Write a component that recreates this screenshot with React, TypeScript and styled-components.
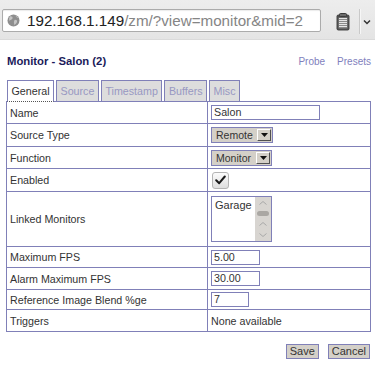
import React from 'react'
import styled, { createGlobalStyle } from 'styled-components'

const GlobalStyle = createGlobalStyle`
    html, body {
        margin: 0;
        padding: 0;
        background: #ffffff;
    }
    body {
        font-family: "Liberation Sans", Arial, sans-serif;
        font-size: 10.7px;
        color: #333333;
    }
`

const BORDER = '#8080b8'

const StyledChrome = styled.div`
    height: 40px;
    box-sizing: border-box;
    display: flex;
    align-items: flex-start;
    padding: 9px 0 0 2px;
    background: linear-gradient(#ededed, #e4e4e4);
    border-bottom: 1px solid #dadada;
`

const StyledAddressField = styled.div`
    width: 319px;
    height: 23px;
    box-sizing: border-box;
    display: flex;
    align-items: center;
    gap: 7px;
    padding-left: 4px;
    background: #ffffff;
    border: 1px solid #ababab;
    border-radius: 2px;
    box-shadow: inset 0 1px 1px rgba(0, 0, 0, 0.08);
`

const StyledUrl = styled.span`
    font-size: 15.2px;
    color: #858585;
    white-space: nowrap;

    b {
        font-weight: normal;
        color: #222222;
    }
`

const StyledToolbarIcons = styled.div`
    display: flex;
    align-items: center;
    height: 25px;
    margin-left: 15px;
`

const StyledSeparator = styled.div`
    width: 1px;
    height: 25px;
    margin: 0 3px 0 9px;
    background: #c9c9c9;
    box-shadow: 1px 0 0 #f6f6f6;
`

const StyledPage = styled.div`
    padding: 14px 4px 0 6px;
`

const StyledHeader = styled.div`
    display: flex;
    justify-content: space-between;
    align-items: center;
    height: 14px;
    padding: 0 0 0 1px;
`

const StyledTitle = styled.h2`
    margin: 0;
    font-size: 11.3px;
    font-weight: bold;
    color: #1b1b5a;
`

const StyledLinks = styled.div`
    display: flex;
    gap: 12px;
    font-size: 10px;
    color: #7f7fbd;
`

const StyledTabList = styled.div`
    display: flex;
    align-items: flex-start;
    gap: 2px;
    height: 21px;
    margin: 12px 0 0 1px;
`

const StyledTab = styled.div<{ $active?: boolean }>`
    position: relative;
    z-index: 1;
    height: ${({ $active }) => ($active ? '22px' : '21px')};
    box-sizing: border-box;
    padding: 0 3.5px;
    line-height: 20px;
    border: 1px solid ${BORDER};
    border-bottom: ${({ $active }) => ($active ? '1px dotted #555' : 'none')};
    background: ${({ $active }) => ($active ? '#ffffff' : '#dddddd')};
    color: ${({ $active }) => ($active ? '#333333' : '#9898c2')};
`

const StyledForm = styled.div`
    display: grid;
    grid-template-columns: 201px 1fr;
    width: 365px;
    box-sizing: border-box;
    border: 1px solid ${BORDER};
`

const StyledLabel = styled.div<{ $h: number; $last?: boolean }>`
    height: ${({ $h }) => $h}px;
    box-sizing: border-box;
    display: flex;
    align-items: center;
    padding-left: 3px;
    border-right: 1px solid ${BORDER};
    border-bottom: ${({ $last }) => ($last ? 'none' : `1px solid ${BORDER}`)};
`

const StyledValue = styled(StyledLabel)`
    border-right: none;
`

const StyledInput = styled.div<{ $w: number }>`
    width: ${({ $w }) => $w}px;
    height: 15px;
    box-sizing: border-box;
    padding: 0 2px;
    line-height: 13px;
    border: 1px solid ${BORDER};
    background: #ffffff;
    color: #333333;
`

const StyledSelect = styled.div<{ $w: number }>`
    width: ${({ $w }) => $w}px;
    height: 16px;
    box-sizing: border-box;
    display: flex;
    align-items: center;
    justify-content: space-between;
    padding: 0 1px 0 4px;
    border: 1px solid ${BORDER};
    background: #d4d0c8;
    font-size: 10.5px;
    color: #333333;
`

const StyledSelectButton = styled.div`
    width: 14px;
    height: 12px;
    box-sizing: border-box;
    display: flex;
    align-items: center;
    justify-content: center;
    background: #d4d0c8;
    border-top: 1px solid #ffffff;
    border-left: 1px solid #ffffff;
    border-right: 1px solid #505050;
    border-bottom: 1px solid #505050;
`

const StyledCheckbox = styled.div`
    width: 17px;
    height: 17px;
    box-sizing: border-box;
    margin-left: 1px;
    display: flex;
    align-items: center;
    justify-content: center;
    border: 1px solid #b4b4b4;
    border-radius: 3px;
    background: linear-gradient(#fbfbfb, #dedede);
`

const StyledListBox = styled.div`
    width: 61px;
    height: 46px;
    box-sizing: border-box;
    display: flex;
    border: 1px solid ${BORDER};
    background: #ffffff;
`

const StyledListItems = styled.div`
    flex: 1;
    padding: 2px 0 0 3px;
    line-height: 13px;
    font-size: 11px;
`

const StyledScrollbar = styled.div`
    width: 16px;
    background: #d8d5d1;
`

const StyledActions = styled.div`
    display: flex;
    justify-content: flex-end;
    gap: 9px;
    margin-top: 12px;
    padding-right: 1px;
`

const StyledButton = styled.div`
    height: 15px;
    box-sizing: border-box;
    padding: 0 3px;
    line-height: 13px;
    border: 1px solid ${BORDER};
    background: #d4d0c8;
    color: #333333;
    font-size: 11px;
`

const Globe = () => (
    <svg width='13' height='13' viewBox='0 0 13 13'>
        <circle cx='6.5' cy='6.5' r='6' fill='#8e8e8e' />
        <path d='M3 2.5 C4.5 2 6 3 5.5 4.5 C5 6 3 5.5 2.5 7 C2 5.5 1.8 3.8 3 2.5 Z' fill='#c4c4c4' />
        <path d='M7.5 6 C9 5.5 10.5 6.5 10 8 C9.5 9.5 8 10.5 7 11 C7.5 9.5 6.5 8.5 7 7.5 Z' fill='#c4c4c4' />
        <path d='M8 1.2 C9.5 1.6 10.8 2.6 11.5 4 C10.5 4 9.5 3.2 8 1.2 Z' fill='#b8b8b8' />
    </svg>
)

const NoteIcon = () => (
    <svg width='14' height='18' viewBox='0 0 14 18'>
        <rect x='0.5' y='1.5' width='13' height='16' rx='2' fill='#4b4b4b' />
        <rect x='3.5' y='0.5' width='7' height='3' rx='1' fill='#6a6a6a' stroke='#3a3a3a' />
        <rect x='2.5' y='4.5' width='9' height='11' fill='#8a8a8a' />
        {[5.5, 7.5, 9.5, 11.5, 13.5].map(y => (
            <line key={y} x1='3' x2='11' y1={y} y2={y} stroke='#e4e4e4' strokeWidth='1' />
        ))}
    </svg>
)

const ChevronDown = () => (
    <svg width='8' height='6' viewBox='0 0 8 6'>
        <path d='M1 1.5 L4 4.5 L7 1.5' fill='none' stroke='#333' strokeWidth='1.5' />
    </svg>
)

const DropArrow = () => (
    <svg width='7' height='4' viewBox='0 0 7 4'>
        <path d='M0 0 H7 L3.5 4 Z' fill='#111' />
    </svg>
)

const Check = () => (
    <svg width='11' height='10' viewBox='0 0 11 10'>
        <path d='M1.2 5.2 L4.2 8.2 L9.8 1.5' fill='none' stroke='#1a1a1a' strokeWidth='2' strokeLinecap='round' strokeLinejoin='round' />
    </svg>
)

const ScrollbarArt = () => (
    <svg width='16' height='44' viewBox='0 0 16 44'>
        <path d='M4.5 7.5 L8 4.5 L11.5 7.5' fill='none' stroke='#a9a9a9' strokeWidth='1' />
        <rect x='2' y='14' width='12' height='5' rx='2.5' fill='#aaa7a3' />
        <path d='M4.5 28.5 L8 25.5 L11.5 28.5' fill='none' stroke='#a9a9a9' strokeWidth='1' />
        <path d='M4.5 36.5 L8 39.5 L11.5 36.5' fill='none' stroke='#a9a9a9' strokeWidth='1' />
    </svg>
)

const rows: { label: string; h: number; key: string }[] = [
    { label: 'Name', h: 22, key: 'name' },
    { label: 'Source Type', h: 23, key: 'source' },
    { label: 'Function', h: 22, key: 'function' },
    { label: 'Enabled', h: 23, key: 'enabled' },
    { label: 'Linked Monitors', h: 55, key: 'linked' },
    { label: 'Maximum FPS', h: 21, key: 'maxfps' },
    { label: 'Alarm Maximum FPS', h: 22, key: 'alarmfps' },
    { label: 'Reference Image Blend %ge', h: 20, key: 'blend' },
    { label: 'Triggers', h: 21, key: 'triggers' },
]

const renderValue = (key: string) => {
    switch (key) {
        case 'name':
            return <StyledInput $w={109}>Salon</StyledInput>
        case 'source':
            return (
                <StyledSelect $w={62}>
                    Remote
                    <StyledSelectButton><DropArrow /></StyledSelectButton>
                </StyledSelect>
            )
        case 'function':
            return (
                <StyledSelect $w={61}>
                    Monitor
                    <StyledSelectButton><DropArrow /></StyledSelectButton>
                </StyledSelect>
            )
        case 'enabled':
            return <StyledCheckbox><Check /></StyledCheckbox>
        case 'linked':
            return (
                <StyledListBox>
                    <StyledListItems>Garage</StyledListItems>
                    <StyledScrollbar><ScrollbarArt /></StyledScrollbar>
                </StyledListBox>
            )
        case 'maxfps':
            return <StyledInput $w={49}>5.00</StyledInput>
        case 'alarmfps':
            return <StyledInput $w={49}>30.00</StyledInput>
        case 'blend':
            return <StyledInput $w={38}>7</StyledInput>
        default:
            return <span>None available</span>
    }
}

const tabs = ['General', 'Source', 'Timestamp', 'Buffers', 'Misc']

const App = () => {
    return (
        <>
            <GlobalStyle />
            <StyledChrome>
                <StyledAddressField>
                    <Globe />
                    <StyledUrl>
                        <b>192.168.1.149</b>/zm/?view=monitor&amp;mid=2
                    </StyledUrl>
                </StyledAddressField>
                <StyledToolbarIcons>
                    <NoteIcon />
                    <StyledSeparator />
                    <ChevronDown />
                </StyledToolbarIcons>
            </StyledChrome>

            <StyledPage>
                <StyledHeader>
                    <StyledTitle>Monitor - Salon (2)</StyledTitle>
                    <StyledLinks>
                        <span>Probe</span>
                        <span>Presets</span>
                    </StyledLinks>
                </StyledHeader>

                <StyledTabList>
                    {tabs.map((t, i) => (
                        <StyledTab key={t} $active={i === 0}>{t}</StyledTab>
                    ))}
                </StyledTabList>

                <StyledForm>
                    {rows.map((r, i) => (
                        <React.Fragment key={r.key}>
                            <StyledLabel $h={r.h} $last={i === rows.length - 1}>{r.label}</StyledLabel>
                            <StyledValue $h={r.h} $last={i === rows.length - 1}>{renderValue(r.key)}</StyledValue>
                        </React.Fragment>
                    ))}
                </StyledForm>

                <StyledActions>
                    <StyledButton>Save</StyledButton>
                    <StyledButton>Cancel</StyledButton>
                </StyledActions>
            </StyledPage>
        </>
    )
}

export default App
